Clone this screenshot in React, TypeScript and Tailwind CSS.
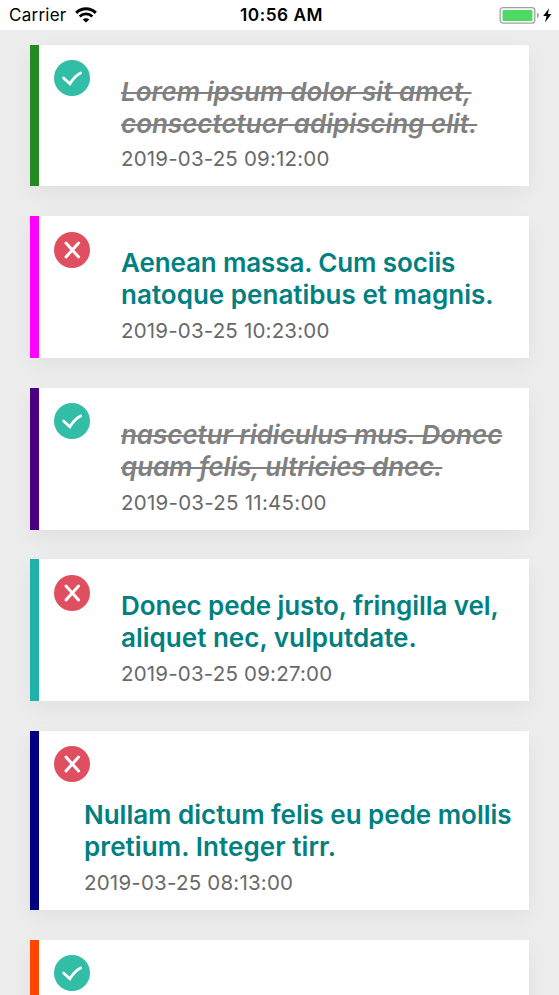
import React from "react";

type Line = { text: string; spacing: string };
type Task = {
  bar: string;
  card: string;
  icon: string;
  done: boolean;
  stacked?: boolean;
  body: string;
  lines: Line[];
  date: string;
  dateSpacing: string;
};

const tasks: Task[] = [
  {
    bar: "bg-[#228b22]",
    card: "h-[141px]",
    icon: "mt-[15px]",
    done: true,
    body: "pt-[31px] pl-[31px]",
    lines: [
      { text: "Lorem ipsum dolor sit amet,", spacing: "tracking-[0.04px]" },
      { text: "consectetuer adipiscing elit.", spacing: "tracking-[-0.01px]" },
    ],
    date: "2019-03-25 09:12:00",
    dateSpacing: "mt-[6px] tracking-[0.18px]",
  },
  {
    bar: "bg-[#ff00ff]",
    card: "mt-[30px] h-[142px]",
    icon: "mt-4",
    done: false,
    body: "pt-[31px] pl-[31px]",
    lines: [
      { text: "Aenean massa. Cum sociis", spacing: "tracking-[-0.12px]" },
      { text: "natoque penatibus et magnis.", spacing: "tracking-[0.02px]" },
    ],
    date: "2019-03-25 10:23:00",
    dateSpacing: "mt-[6.5px] tracking-[0.18px]",
  },
  {
    bar: "bg-[#4b0082]",
    card: "mt-[30px] h-[142px]",
    icon: "mt-[15px]",
    done: true,
    body: "pt-[31px] pl-[31px]",
    lines: [
      { text: "nascetur ridiculus mus. Donec", spacing: "tracking-[-0.05px]" },
      { text: "quam felis, ultricies dnec.", spacing: "tracking-[-0.1px]" },
    ],
    date: "2019-03-25 11:45:00",
    dateSpacing: "mt-[6.5px] tracking-[0.25px]",
  },
  {
    bar: "bg-[#20b2aa]",
    card: "mt-[29px] h-[142px]",
    icon: "mt-4",
    done: false,
    body: "pt-[31px] pl-[31px]",
    lines: [
      { text: "Donec pede justo, fringilla vel,", spacing: "tracking-[-0.08px]" },
      { text: "aliquet nec, vulputdate.", spacing: "tracking-[0.02px]" },
    ],
    date: "2019-03-25 09:27:00",
    dateSpacing: "mt-[6.5px] tracking-[0.19px]",
  },
  {
    bar: "bg-[#000080]",
    card: "mt-[30px] h-[179px]",
    icon: "mt-[15px]",
    done: false,
    stacked: true,
    body: "w-full pt-[17px] pl-[30px]",
    lines: [
      { text: "Nullam dictum felis eu pede mollis", spacing: "tracking-[-0.02px]" },
      { text: "pretium. Integer tirr.", spacing: "tracking-[0.08px]" },
    ],
    date: "2019-03-25 08:13:00",
    dateSpacing: "mt-[6.5px] tracking-[0.21px]",
  },
  {
    bar: "bg-[#ff4500]",
    card: "mt-[30px] h-[142px]",
    icon: "mt-[15px]",
    done: true,
    body: "",
    lines: [],
    date: "",
    dateSpacing: "",
  },
];

function StatusIcon({ done, className }: { done: boolean; className: string }) {
  return (
    <svg viewBox="0 0 36 36" className={`block h-9 w-9 shrink-0 ${className}`}>
      <circle cx="18" cy="18" r="18" fill={done ? "#32bea6" : "#e04f5f"} />
      {done ? (
        <path
          d="M9.6 18 L15.9 23.8 C18.6 19 22 15.2 26.7 12.9"
          fill="none"
          stroke="#fff"
          strokeWidth="2.8"
          strokeLinecap="round"
        />
      ) : (
        <path
          d="M12 11 L24.6 25 M24.6 11 L12 25"
          fill="none"
          stroke="#fff"
          strokeWidth="3"
          strokeLinecap="round"
        />
      )}
    </svg>
  );
}

function StatusBar() {
  return (
    <header className="grid h-[30px] grid-cols-3 items-center bg-white text-[17.3px] leading-[30px] text-black">
      <div className="flex items-center gap-[9px] pl-[9px]">
        <span className="text-[17px] tracking-[0.25px]">Carrier</span>
        <svg viewBox="0 0 22 16" className="h-4 w-[22px]">
          <path d="M1.2 5.9 C6.6 .3 15.4 .3 20.8 5.9" fill="none" stroke="#000" strokeWidth="3" />
          <path d="M4.7 9.4 C8.2 6 13.8 6 17.3 9.4" fill="none" stroke="#000" strokeWidth="2.8" />
          <path d="M11 15.6 L7.7 12.4 C9.6 10.7 12.4 10.7 14.3 12.4 Z" fill="#000" />
        </svg>
      </div>
      <div className="pl-1 text-center font-semibold tracking-[0.5px] whitespace-nowrap">10:56 AM</div>
      <div className="flex items-center justify-end pr-[6px]">
        <svg viewBox="0 0 54 18" className="h-[18px] w-[54px]">
          <rect x="1.2" y="1.6" width="34.6" height="15.6" rx="3" fill="#fff" stroke="#a1a1a4" strokeWidth="1.3" />
          <rect x="3.5" y="3.9" width="30" height="11" rx="1" fill="#4cd964" />
          <path d="M38 6.6 C40.4 7.4 40.4 11.4 38 12.2 Z" fill="#a1a1a4" />
          <path d="M50 2.2 L44.2 10 H47.6 L46 16.4 L52.4 8 H48.9 Z" fill="#000" />
        </svg>
      </div>
    </header>
  );
}

function TaskCard({ task }: { task: Task }) {
  return (
    <article
      className={`flex shrink-0 bg-white shadow-[0_7px_22px_rgba(0,0,0,0.06)] ${task.card}`}
    >
      <div className={`w-[9px] shrink-0 ${task.bar}`} />
      <div className={`flex min-w-0 flex-1 pl-[15px] ${task.stacked ? "flex-col" : ""}`}>
        <StatusIcon done={task.done} className={task.icon} />
        {task.lines.length > 0 && (
          <div className={task.body}>
            <h2
              className={`text-[26px] leading-8 font-semibold whitespace-nowrap ${
                task.done ? "text-[#808080] italic" : "text-[#008080]"
              }`}
            >
              {task.lines.map((line) => (
                <span
                  key={line.text}
                  className={`block ${line.spacing} ${
                    task.done ? "line-through decoration-[2px]" : ""
                  }`}
                >
                  {line.text}
                </span>
              ))}
            </h2>
            <p
              className={`text-[20.5px] leading-[26px] whitespace-nowrap text-[#696969] ${task.dateSpacing}`}
            >
              {task.date}
            </p>
          </div>
        )}
      </div>
    </article>
  );
}

export default function App() {
  return (
    <div className="h-[995px] w-[559px] overflow-hidden bg-[#ededed] font-['Inter',sans-serif]">
      <StatusBar />
      <main className="flex flex-col px-[30px] pt-[15px]">
        {tasks.map((task) => (
          <TaskCard key={task.bar} task={task} />
        ))}
      </main>
    </div>
  );
}
